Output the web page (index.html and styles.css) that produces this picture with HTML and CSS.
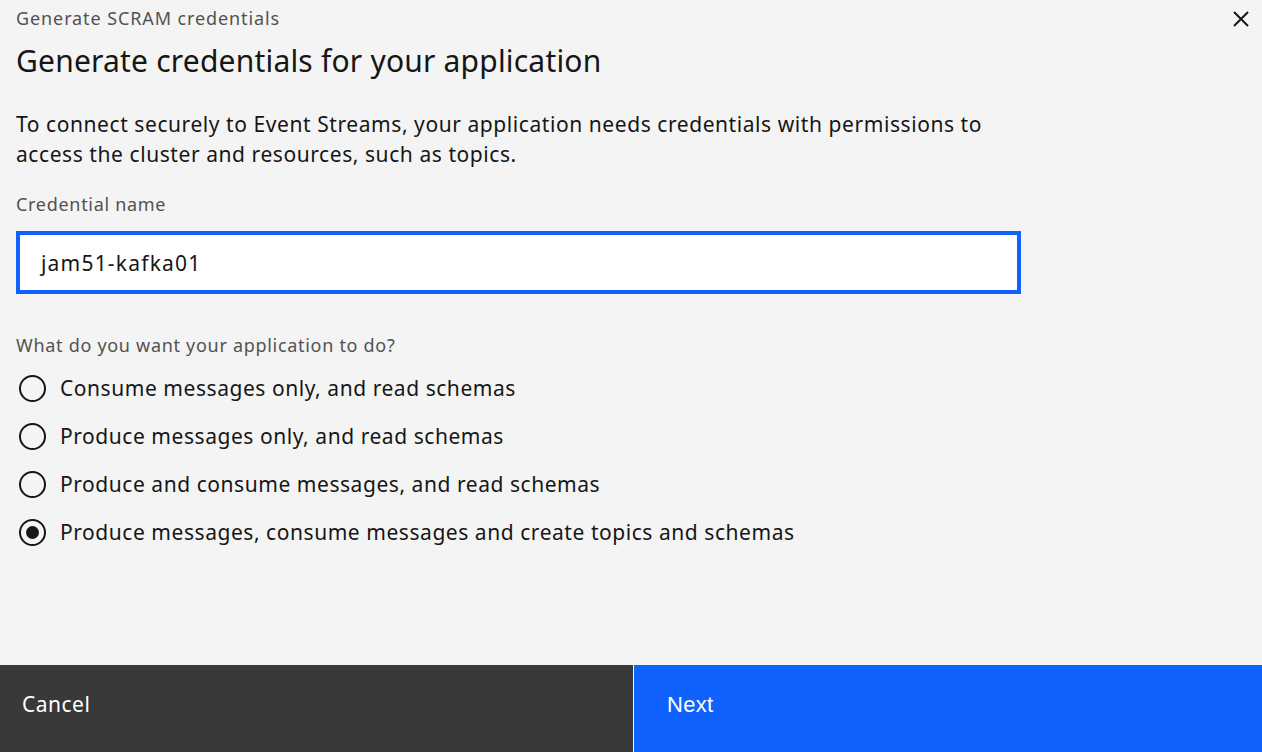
FILE: index.html
```html
<!DOCTYPE html>
<html lang="en">
<head>
<meta charset="utf-8">
<title>Generate SCRAM credentials</title>
<link rel="stylesheet" href="styles.css">
</head>
<body>
<div class="modal">
  <div class="modal-body">
    <div class="header-row">
      <div class="eyebrow">Generate SCRAM credentials</div>
      <button class="close" aria-label="Close">
        <svg width="18" height="18" viewBox="0 0 18 18"><path d="M2 2 L16 16 M16 2 L2 16" stroke="#161616" stroke-width="2" fill="none"/></svg>
      </button>
    </div>
    <h2 class="title">Generate credentials for your application</h2>
    <p class="desc">To connect securely to Event Streams, your application needs credentials with permissions to access the cluster and resources, such as topics.</p>
    <label class="field-label">Credential name</label>
    <div class="input">jam51-kafka01</div>
    <div class="field-label question">What do you want your application to do?</div>
    <div class="radios">
      <div class="radio-row"><span class="radio"></span><span class="radio-label">Consume messages only, and read schemas</span></div>
      <div class="radio-row"><span class="radio"></span><span class="radio-label">Produce messages only, and read schemas</span></div>
      <div class="radio-row"><span class="radio"></span><span class="radio-label">Produce and consume messages, and read schemas</span></div>
      <div class="radio-row"><span class="radio checked"></span><span class="radio-label">Produce messages, consume messages and create topics and schemas</span></div>
    </div>
  </div>
  <div class="footer">
    <button class="btn btn-secondary">Cancel</button>
    <button class="btn btn-primary">Next</button>
  </div>
</div>
</body>
</html>
```

FILE: styles.css
```css
html, body {
  margin: 0;
  padding: 0;
}
body {
  background: #f4f4f4;
  font-family: "Noto Sans", "Open Sans", sans-serif;
  color: #161616;
}
.modal {
  height: 752px;
  display: flex;
  flex-direction: column;
}
.modal-body {
  padding: 6px 0 0 16px;
  flex: 1;
  display: flex;
  flex-direction: column;
}
.header-row {
  display: flex;
  align-items: center;
  justify-content: space-between;
}
.eyebrow {
  font-size: 18px;
  letter-spacing: 0.9px;
  line-height: 24px;
  color: #525252;
}
.close {
  background: none;
  border: 0;
  padding: 0;
  width: 18px;
  height: 18px;
  margin-right: 12px;
  margin-top: 2px;
  display: flex;
}
.title {
  margin: 13px 0 0;
  font-size: 30px;
  letter-spacing: 0.2px;
  font-weight: 400;
  line-height: 36px;
}
.desc {
  margin: 30px 0 0;
  width: 1000px;
  font-size: 21px;
  letter-spacing: 0.57px;
  line-height: 30px;
}
.field-label {
  display: block;
  margin-top: 23px;
  font-size: 18px;
  letter-spacing: 0.7px;
  line-height: 24px;
  color: #525252;
}
.input {
  margin-top: 15px;
  width: 1005px;
  height: 63px;
  box-sizing: border-box;
  border: 4px solid #0f62fe;
  background: #fff;
  padding-left: 21px;
  display: flex;
  align-items: center;
  font-size: 21px;
  letter-spacing: 1.2px;
}
.question {
  margin-top: 39px;
}
.radios {
  margin-top: 7px;
  display: flex;
  flex-direction: column;
}
.radio-row {
  height: 48px;
  display: flex;
  align-items: center;
}
.radio {
  width: 27px;
  height: 27px;
  box-sizing: border-box;
  border: 2px solid #161616;
  border-radius: 50%;
  margin-left: 3px;
  margin-right: 14px;
  display: flex;
  align-items: center;
  justify-content: center;
}
.radio.checked::after {
  content: "";
  width: 13px;
  height: 13px;
  border-radius: 50%;
  background: #161616;
}
.radio-label {
  font-size: 21px;
  letter-spacing: 0.55px;
}
.footer {
  height: 87px;
  display: grid;
  grid-template-columns: 633px 1fr;
  column-gap: 1px;
}
.btn {
  border: 0;
  margin: 0;
  text-align: left;
  color: #fff;
  padding: 0 0 8px;
}
.btn-secondary {
  background: #393939;
  padding: 0 0 10px 22px;
  font-family: "Noto Sans", sans-serif;
  font-size: 21px;
  letter-spacing: 0.5px;
}
.btn-primary {
  background: #0f62fe;
  padding-left: 33px;
  font-family: "Liberation Sans", Arial, sans-serif;
  font-size: 22px;
  letter-spacing: 0.3px;
}
```
